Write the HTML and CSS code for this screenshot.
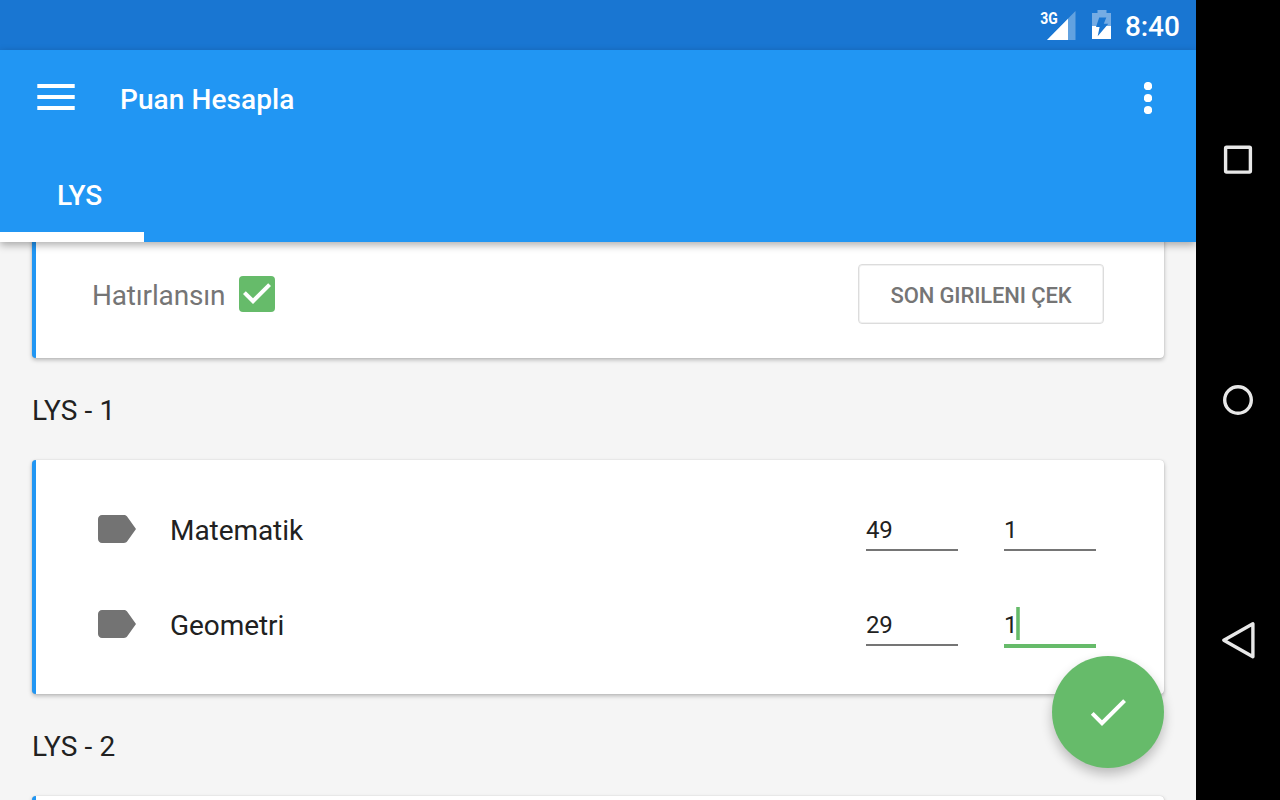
FILE: index.html
```html
<!DOCTYPE html>
<html lang="tr">
<head>
<meta charset="utf-8">
<title>Puan Hesapla</title>
<link rel="stylesheet" href="styles.css">
</head>
<body>
<div class="device">
  <div class="app">
    <div class="statusbar">
      <svg class="signal" width="40" height="50" viewBox="0 0 40 50">
        <path d="M35.500 11V40H7z" fill="#fff" fill-opacity=".32"/>
        <path d="M28 18.700V40H7z" fill="#fff"/>
        <text class="network" x="0.3" y="23.5" textLength="17.5" lengthAdjust="spacingAndGlyphs">3G</text>
      </svg>
      <svg class="battery" width="20" height="50" viewBox="0 0 20 50">
        <path d="M5.500 10h9v3H19v13H0V13h5.500z" fill="#fff" fill-opacity=".4"/>
        <path d="M0 26h19v13H0z" fill="#fff"/>
        <path d="M7.200 17.500H14.300L11.800 23.700H16.300L5.700 36.300L7.600 27H4z" fill="#1976d2"/>
      </svg>
      <span class="clock">8:40</span>
    </div>
    <header class="appbar">
      <div class="toolbar">
        <svg class="menu" width="38" height="26" viewBox="0 0 38 26"><path d="M.3 0h37.400v4H.3zM.3 11h37.400v4H.3zM.3 22h37.400v4H.3z" fill="#fff"/></svg>
        <h1 class="title">Puan Hesapla</h1>
        <svg class="more" width="8" height="32" viewBox="0 0 8 32"><g fill="#fff"><circle cx="4" cy="4" r="4.100"/><circle cx="4" cy="16" r="4.100"/><circle cx="4" cy="28" r="4.100"/></g></svg>
      </div>
      <nav class="tabs"><div class="tab">LYS</div></nav>
    </header>
    <main class="content">
      <section class="card card-options">
        <label class="remember">
          <span class="remember-text">Hatırlansın</span>
          <svg width="36" height="36" viewBox="3 3 18 18"><rect x="3" y="3" width="18" height="18" rx="2" fill="#66bb6a"/><path d="M10 17l-5-5 1.410-1.410L10 14.170l7.590-7.590L19 8z" fill="#fff"/></svg>
        </label>
        <button class="fetch">SON GIRILENI ÇEK</button>
      </section>
      <h2 class="heading">LYS - 1</h2>
      <section class="card card-list">
        <div class="row">
          <svg class="label-icon" width="48" height="48" viewBox="0 0 24 24"><path d="M17.630 5.840C17.270 5.330 16.670 5 16 5L5 5.010C3.900 5.010 3 5.900 3 7v10c0 1.100.9 1.990 2 1.990L16 19c.67 0 1.270-.33 1.630-.84L22 12z"/></svg>
          <span class="subject">Matematik</span>
          <div class="field">49</div>
          <div class="field">1</div>
        </div>
        <div class="row">
          <svg class="label-icon" width="48" height="48" viewBox="0 0 24 24"><path d="M17.630 5.840C17.270 5.330 16.670 5 16 5L5 5.010C3.900 5.010 3 5.900 3 7v10c0 1.100.9 1.990 2 1.990L16 19c.67 0 1.270-.33 1.630-.84L22 12z"/></svg>
          <span class="subject">Geometri</span>
          <div class="field">29</div>
          <div class="field field-focus">1<i class="caret"></i></div>
        </div>
      </section>
      <h2 class="heading">LYS - 2</h2>
      <section class="card card-next"></section>
    </main>
    <button class="fab" aria-label="Hesapla"><svg width="48" height="48" viewBox="0 0 24 24"><path d="M9 16.170L4.830 12l-1.420 1.410L9 19 21 7l-1.410-1.410z" fill="#fff"/></svg></button>
  </div>
  <aside class="navbar">
    <svg width="40" height="40" viewBox="0 0 40 40"><rect x="7.600" y="7.300" width="24.800" height="24.800" rx="1" class="nav-stroke"/></svg>
    <svg width="40" height="40" viewBox="0 0 40 40"><circle cx="20" cy="20" r="13.300" class="nav-stroke"/></svg>
    <svg width="40" height="40" viewBox="0 0 40 40"><path d="M5.800 20.200L34.900 3.800V36.800z" class="nav-stroke"/></svg>
  </aside>
</div>
</body>
</html>
```

FILE: styles.css
```css
* { box-sizing: border-box; }
body { margin: 0; font-family: Roboto, "Noto Sans", sans-serif; font-size: 28px; color: #212121; }
svg { display: block; flex: none; }
button { font-family: inherit; padding: 0; border: 0; }

.device { display: flex; width: 1280px; height: 800px; overflow: hidden; background: #000; }
.app { position: relative; display: flex; flex-direction: column; width: 1196px; height: 800px; overflow: hidden; background: #f5f5f5; }

.statusbar { display: flex; flex: none; height: 50px; padding-left: 1040px; background: #1976d2; color: #fff; }
.network { font-size: 16.500px; font-weight: 700; fill: #fff; }
.battery { margin-left: 12px; }
.clock { margin-left: 13px; line-height: 53px; font-weight: 500; letter-spacing: -.1px; }

.appbar { position: relative; z-index: 1; flex: none; height: 192px; background: #2196f3; color: #fff; box-shadow: 0 3px 8px rgba(0, 0, 0, .32); }
.toolbar { display: flex; align-items: center; height: 96px; padding: 0 44px 0 37px; }
.menu { margin-top: -2px; }
.title { flex: 1; margin: 3px 0 0 45px; font-size: 28px; font-weight: 500; line-height: 40px; letter-spacing: .08px; }
.tabs { display: flex; height: 96px; }
.tab { width: 144px; padding-left: 57px; border-bottom: 10px solid #fff; font-weight: 500; line-height: 100px; letter-spacing: -.2px; }

.content { display: flex; flex-direction: column; flex: 1; padding: 0 32px; }
.card { flex: none; background: #fff; border-left: 4px solid #2196f3; border-radius: 4px; box-shadow: 0 2px 4px rgba(0, 0, 0, .26), 0 0 1px rgba(0, 0, 0, .22); }
.card-options { display: flex; align-items: center; justify-content: space-between; height: 136px; margin-top: -20px; padding: 8px 60px 0 56px; }
.remember { display: flex; align-items: center; color: #757575; }
.remember-text { width: 147px; padding-top: 3px; line-height: 36px; letter-spacing: -.17px; }
.fetch { width: 246px; height: 60px; padding-top: 3px; border: 1.500px solid #dcdcdc; box-shadow: inset 0 0 0 1px #f1f1f1; border-radius: 4px; background: #fff; color: #757575; font-size: 22px; font-weight: 500; letter-spacing: -.13px; }
.heading { height: 102px; margin: 0; font-size: 28px; font-weight: 400; line-height: 106px; letter-spacing: .12px; }
.card-list { height: 234px; padding: 22px 68px 22px 56px; }
.row { display: flex; align-items: center; height: 95px; }
.label-icon { fill: #737373; margin-top: -1px; }
.subject { flex: 1; margin-left: 30px; padding-top: 2px; line-height: 40px; letter-spacing: -.06px; }
.field { position: relative; width: 92px; height: 43px; margin-left: 46px; border-bottom: 2px solid #757575; font-size: 24px; line-height: 45px; letter-spacing: -.3px; }
.field:nth-child(3) { margin-left: 0; }
.field-focus { height: 45px; margin-top: 2px; border-bottom: 4px solid #66bb6a; }
.caret { position: absolute; left: 12px; top: 4px; width: 4px; height: 33px; background: linear-gradient(90deg, #9ad29c, #66bb6a 35%, #66bb6a 65%, #9ad29c); }
.card-next { height: 100px; }

.fab { position: absolute; z-index: 2; right: 32px; bottom: 32px; display: flex; align-items: center; justify-content: center; width: 112px; height: 112px; border-radius: 50%; background: #66bb6a; box-shadow: 0 6px 12px rgba(0, 0, 0, .24); }

.navbar { display: flex; flex-direction: column; align-items: center; justify-content: center; gap: 200px; width: 84px; background: #000; }
.nav-stroke { fill: none; stroke: #e8e8e8; stroke-width: 3.400; stroke-linejoin: round; }
```
